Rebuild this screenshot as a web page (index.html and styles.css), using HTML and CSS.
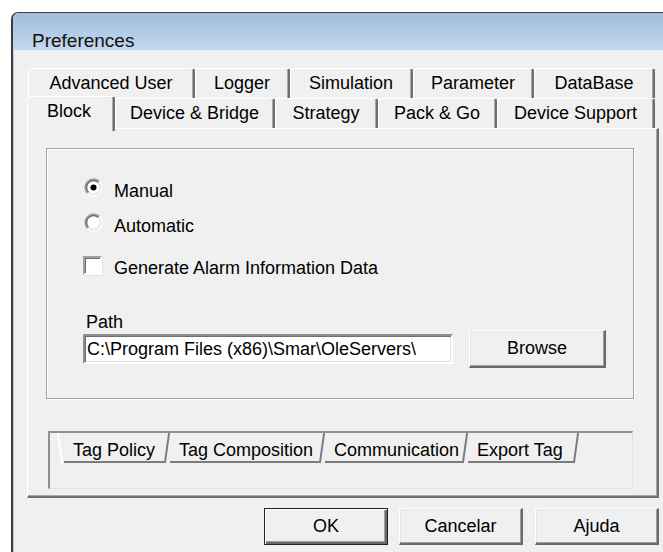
FILE: index.html
```html
<!DOCTYPE html>
<html>
<head>
<meta charset="utf-8">
<title>Preferences</title>
<link rel="stylesheet" href="styles.css">
</head>
<body>
<div class="window">
  <div class="titlebar">Preferences</div>
  <div class="client">
    <div class="tabctl">
      <div class="tabrow tabrow-back">
        <div class="tab">Advanced User</div>
        <div class="tab">Logger</div>
        <div class="tab">Simulation</div>
        <div class="tab">Parameter</div>
        <div class="tab">DataBase</div>
      </div>
      <div class="tabrow tabrow-front">
        <div class="tab tab-active">Block</div>
        <div class="tab">Device &amp; Bridge</div>
        <div class="tab">Strategy</div>
        <div class="tab">Pack &amp; Go</div>
        <div class="tab">Device Support</div>
      </div>
      <div class="tabpage">
        <div class="groupbox">
          <div class="option option-manual">
            <svg class="radio" width="19" height="19" viewBox="0 0 19 19">
              <circle cx="9.5" cy="9.5" r="8" fill="#fff"/>
              <path d="M3.49 15.51 A8.5 8.5 0 0 1 15.51 3.49" fill="none" stroke="#a0a0a0" stroke-width="1.5"/>
              <path d="M15.51 3.49 A8.5 8.5 0 0 1 3.49 15.51" fill="none" stroke="#fff" stroke-width="1.5"/>
              <path d="M4.55 14.45 A7 7 0 0 1 14.45 4.55" fill="none" stroke="#696969" stroke-width="1.5"/>
              <path d="M14.45 4.55 A7 7 0 0 1 4.55 14.45" fill="none" stroke="#e3e3e3" stroke-width="1.5"/>
              <circle cx="9.5" cy="9.5" r="3" fill="#000"/>
            </svg>
            <span>Manual</span>
          </div>
          <div class="option option-auto">
            <svg class="radio" width="19" height="19" viewBox="0 0 19 19">
              <circle cx="9.5" cy="9.5" r="8" fill="#fff"/>
              <path d="M3.49 15.51 A8.5 8.5 0 0 1 15.51 3.49" fill="none" stroke="#a0a0a0" stroke-width="1.5"/>
              <path d="M15.51 3.49 A8.5 8.5 0 0 1 3.49 15.51" fill="none" stroke="#fff" stroke-width="1.5"/>
              <path d="M4.55 14.45 A7 7 0 0 1 14.45 4.55" fill="none" stroke="#696969" stroke-width="1.5"/>
              <path d="M14.45 4.55 A7 7 0 0 1 4.55 14.45" fill="none" stroke="#e3e3e3" stroke-width="1.5"/>
            </svg>
            <span>Automatic</span>
          </div>
          <div class="option option-check">
            <span class="checkbox"></span>
            <span>Generate Alarm Information Data</span>
          </div>
          <div class="path-label">Path</div>
          <div class="path-row">
            <div class="textfield">C:\Program Files (x86)\Smar\OleServers\</div>
            <div class="btn btn-browse">Browse</div>
          </div>
        </div>
        <div class="subframe">
          <div class="subtabs">
            <div class="subtab subtab-first st-policy">Tag Policy</div>
            <div class="subtab st-comp">Tag Composition</div>
            <div class="subtab st-comm">Communication</div>
            <div class="subtab st-export">Export Tag</div>
          </div>
        </div>
      </div>
    </div>
    <div class="buttons">
      <div class="btn btn-default">OK</div>
      <div class="btn btn-cancel">Cancelar</div>
      <div class="btn">Ajuda</div>
    </div>
  </div>
</div>
</body>
</html>
```
FILE: styles.css
```css
html, body {
  margin: 0;
  padding: 0;
}

body {
  width: 663px;
  height: 552px;
  overflow: hidden;
  background: #fff;
  font-family: "Liberation Sans", Arial, sans-serif;
  font-size: 18px;
  color: #000;
}

/* dialog frame (runs on past the right and bottom edges) */
.window {
  box-sizing: border-box;
  margin: 12px 0 0 11px;
  width: 652px;
  height: 540px;
  border-top: 1px solid #3d3d3d;
  border-left: 2px solid #3d3d3d;
  border-top-left-radius: 7px;
  background: #f0f0f0;
  overflow: hidden;
  display: flex;
  flex-direction: column;
}

.titlebar {
  height: 37px;
  flex: none;
  box-sizing: border-box;
  padding: 18px 0 0 19px;
  line-height: 19px;
  font-size: 19px;
  color: #111;
  background: linear-gradient(#a1bcdb, #c4d8ed);
}

.client {
  flex: 1;
  min-height: 0;
  border-left: 1px solid #bcd2ea;
  background: #f0f0f0;
}

/* property sheet tabs */
.tabctl {
  margin: 18px 0 0 13px;
  width: 632px;
}

.tabrow {
  display: grid;
  height: 30px;
  margin-left: 1px;
}

.tabrow-back {
  grid-template-columns: 167px 95px 123px 121px 121px;
}

.tabrow-front {
  grid-template-columns: 87px 160px 103px 119px 158px;
  position: relative;
  z-index: 1;
}

.tab {
  box-sizing: border-box;
  border-top: 1px solid #fff;
  border-left: 1px solid #fff;
  border-right: 2px solid #6f6f6f;
  box-shadow: inset -1px 0 #a8a8a8;
  border-radius: 3px 3px 0 0;
  line-height: 29px;
  text-align: center;
  white-space: nowrap;
  background: #f0f0f0;
}

.tab-active {
  margin: -2px 0 -3px -1px;
  padding-left: 19px;
  text-align: left;
}

.tabpage {
  box-sizing: border-box;
  height: 370px;
  border-top: 1px solid #fff;
  border-left: 1px solid #fff;
  border-right: 2px solid #6f6f6f;
  border-bottom: 2px solid #6f6f6f;
  box-shadow: inset -1px -1px #a8a8a8;
  padding: 19px 0 0 18px;
}

/* etched group frame */
.groupbox {
  box-sizing: border-box;
  width: 588px;
  height: 251px;
  border: 1px solid #a0a0a0;
  box-shadow: inset 1px 1px #fff, 1px 1px #fff;
  padding: 32px 0 0 37px;
}

.option {
  display: flex;
  align-items: flex-start;
  height: 20px;
  line-height: 20px;
}

.option-auto {
  margin-top: 15px;
}

.option-check {
  margin-top: 22px;
}

.radio {
  flex: none;
  margin: -3px 11px 0 0;
}

.checkbox {
  flex: none;
  box-sizing: border-box;
  width: 19px;
  height: 19px;
  margin: -2px 12px 0 -1px;
  background: #fff;
  border: 2px solid;
  border-color: #a0a0a0 #fff #fff #a0a0a0;
  box-shadow: inset 1px 1px #6f6f6f, 1px 1px #e3e3e3;
}

.path-label {
  margin: 34px 0 0 2px;
  line-height: 20px;
}

.path-row {
  display: flex;
  align-items: center;
  margin: -2px 0 0 -1px;
}

.textfield {
  box-sizing: border-box;
  width: 370px;
  height: 30px;
  padding-left: 2px;
  line-height: 26px;
  background: #fff;
  border: 2px solid;
  border-color: #8e8e8e #fff #fff #8e8e8e;
  box-shadow: inset 1px 1px #6f6f6f, inset -1px -1px #e3e3e3;
  white-space: nowrap;
}

/* push buttons */
.btn {
  box-sizing: border-box;
  width: 124px;
  height: 37px;
  display: flex;
  align-items: center;
  justify-content: center;
  border-style: solid;
  border-width: 1px 2px 2px 1px;
  border-color: #fff #6a6a6a #6a6a6a #fff;
  box-shadow: inset -1px -1px #a0a0a0, inset 1px 1px #e3e3e3;
  background: #f0f0f0;
  margin-right: 11px;
  flex: none;
}

.btn-browse {
  width: 137px;
  height: 38px;
  margin-left: 16px;
}

.btn-default {
  border: 1px solid #222;
  box-shadow: inset 1px 1px #fff, inset -2px -2px #6a6a6a, inset -3px -3px #a0a0a0;
}

.btn-cancel {
  margin-right: 12px;
}

/* slanted tab strip */
.subframe {
  box-sizing: border-box;
  width: 585px;
  height: 58px;
  margin: 32px 0 0 2px;
  border-top: 2px solid #909090;
  border-left: 2px solid #909090;
  border-right: 1px solid #e2e2e2;
  border-bottom: 1px solid #e2e2e2;
}

.subtabs {
  display: flex;
  margin-left: 14px;
}

.subtab {
  position: relative;
  box-sizing: border-box;
  height: 30px;
  padding: 7px 0 0 9px;
  line-height: 20px;
  border-bottom: 2px solid #7c7c7c;
  margin-right: 6px;
  white-space: nowrap;
}

.subtab::after {
  content: "";
  position: absolute;
  top: 0;
  bottom: -2px;
  right: -4px;
  width: 2px;
  background: #7c7c7c;
  transform: skewX(-8deg);
}

.subtab-first::before {
  content: "";
  position: absolute;
  top: 0;
  bottom: -2px;
  left: -5px;
  width: 2px;
  background: #fff;
  transform: skewX(8deg);
}

.st-policy { width: 100px; }
.st-comp { width: 149px; }
.st-comm { width: 137px; }
.st-export { width: 105px; margin-right: 0; }

.buttons {
  display: flex;
  margin: 10px 0 0 250px;
}
```
